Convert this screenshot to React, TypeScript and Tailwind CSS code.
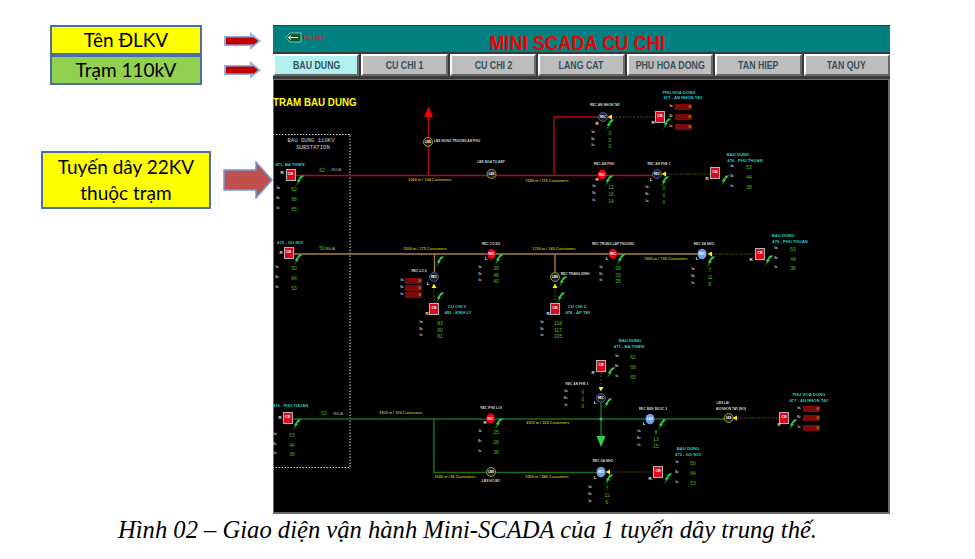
const tabs = ["BAU DUNG", "CU CHI 1", "CU CHI 2", "LANG CAT", "PHU HOA DONG", "TAN HIEP", "TAN QUY"];

// canvas sits at page (273,78), all diagram data below is in page coordinates
const OX = 273;
const OY = 78;

const labelColors = {
  white: "text-[#d4d4d4] text-[3.3px] font-bold",
  meter: "text-[#c4c4c4] text-[3.8px] font-bold",
  flag: "text-[#e8e8e8] text-[4.4px] font-bold",
  cyan: "text-[#25cfc6] text-[4.2px] font-bold",
  green: "text-[#4cc21c] text-[5px]",
  olive: "text-[#b4b414] text-[3.8px] font-bold",
  dim: "text-[#a8a8a8] text-[4px]",
  mono: "text-[#c8c8c8] text-[5.6px] font-['Liberation_Mono',monospace]",
  inner: "text-white text-[2.8px] font-bold",
};

type Tone = keyof typeof labelColors;
type Lbl = [number, number, string, Tone?];

const labels: Lbl[] = [
  // feeder 1
  [311, 141, "BAU DUNG 110KV", "mono"],
  [313, 148, "SUBSTATION", "mono"],
  [290, 165, "471- BA THIEN", "cyan"],
  [322, 169.5, "62", "green"],
  [336, 169.5, "/800A", "dim"],
  [457, 141.5, "LBS NONG TRUONG AN PHU"],
  [491, 163, "LBS NGA TU ANT"],
  [430, 180.5, "2000 m / 124 Customers", "olive"],
  [547, 181.5, "1500 m / 115 Customers", "olive"],
  [605, 106, "REC AN NHON TAY"],
  [679, 92.5, "PHU HOA DONG", "cyan"],
  [683, 98, "477 - AN NHON TAY", "cyan"],
  [604, 165, "REC AN PHU"],
  [659, 164.5, "REC AN PHE 1"],
  [738, 155, "BAU DUNG", "cyan"],
  [745, 160.5, "476 - PHU THUAN", "cyan"],
  // feeder 2
  [290, 243, "472 - GO NOI", "cyan"],
  [322, 248, "50", "green"],
  [330, 249, "/800A", "dim"],
  [425, 250, "1500 m / 175 Customers", "olive"],
  [419, 272, "REC LO 6"],
  [491, 245, "REC CO DO"],
  [457, 307, "CU CHI 2", "cyan"],
  [458, 313, "482 - KINH LY", "cyan"],
  [554, 250, "1700 m / 142 Customers", "olive"],
  [575, 275, "REC TRANG DINH"],
  [577, 307, "CU CHI 2", "cyan"],
  [578, 313, "478 - AP TAY", "cyan"],
  [613, 245, "REC TRUNG LAP THUONG"],
  [666, 259.5, "1800 m / 136 Customers", "olive"],
  [704, 245, "REC SA NHO"],
  [783, 236, "BAU DUNG", "cyan"],
  [790, 242, "476 - PHU THUAN", "cyan"],
  // feeder 3
  [290.5, 406, "476 - PHU THUAN", "cyan"],
  [324, 413, "53", "green"],
  [338, 414, "/800A", "dim"],
  [401, 414, "2500 m / 300 Customers", "olive"],
  [491, 409, "REC PHU LOI"],
  [548, 423.5, "2500 m / 220 Customers", "olive"],
  [455, 478, "1000 m / 85 Customers", "olive"],
  [491, 482, "LBS HO BO"],
  [547, 478, "3000 m / 240 Customers", "olive"],
  [630, 341, "BAU DUNG", "cyan"],
  [629, 346.5, "471 - BA THIEN", "cyan"],
  [577, 385, "REC AN PHE 1"],
  [653, 409.5, "REC BEN DUOC 3"],
  [723, 404, "LBS LAI"],
  [731, 409.5, "AN NHON TAY (NO)"],
  [809, 394.5, "PHU HOA DONG", "cyan"],
  [809, 400.5, "477 - AN NHON TAY", "cyan"],
  [603, 462, "REC SA NHO"],
  [688, 448.5, "BAU DUNG", "cyan"],
  [688, 455, "472 - GO NOI", "cyan"],
  // R / L flags
  [282, 173, "R", "flag"],
  [281, 253, "R", "flag"],
  [280, 418, "R", "flag"],
  [597, 124, "R", "flag"],
  [653, 123, "R", "flag"],
  [597, 180, "R", "flag"],
  [651, 180, "L", "flag"],
  [707, 179, "R", "flag"],
  [428, 284, "L", "flag"],
  [427, 314, "R", "flag"],
  [486, 259, "L", "flag"],
  [548, 314, "R", "flag"],
  [607, 259, "L", "flag"],
  [697, 259, "L", "flag"],
  [751, 260, "R", "flag"],
  [485, 423, "R", "flag"],
  [593, 373, "R", "flag"],
  [595, 403, "L", "flag"],
  [644, 424, "L", "flag"],
  [779, 425, "R", "flag"],
  [595, 478, "L", "flag"],
  [650, 479, "R", "flag"],
  // text inside the switch symbols
  [428, 142, "LBS", "inner"],
  [491.5, 174, "LBS", "inner"],
  [555, 277, "LBS", "inner"],
  [491, 472, "LBS", "inner"],
  [728.7, 418, "LBS", "inner"],
  [603, 117, "REC", "inner"],
  [657, 174, "REC", "inner"],
  [434, 277, "REC", "inner"],
  [601, 398, "REC", "inner"],
  [602, 174.5, "REC", "inner"],
  [491.5, 254, "REC", "inner"],
  [613, 254, "REC", "inner"],
  [490.5, 418.5, "REC", "inner"],
  [702, 254, "REC", "inner"],
  [650, 419, "LBS", "inner"],
  [601, 472, "REC", "inner"],
];

// meter blocks: label x, value x, three rows
const meters: { lx: number; vx: number; ys: number[]; vals: string[] }[] = [
  { lx: 278, vx: 294, ys: [189, 199, 209], vals: ["62", "68", "65"] },
  { lx: 593, vx: 610, ys: [133, 140, 146], vals: ["0", "0", "0"] },
  { lx: 594, vx: 611, ys: [187, 194, 201], vals: ["12", "16", "14"] },
  { lx: 647, vx: 664, ys: [188, 195, 202], vals: ["0", "0", "0"] },
  { lx: 732, vx: 749, ys: [167, 177, 187], vals: ["53", "44", "38"] },
  { lx: 277, vx: 294, ys: [268, 278, 288], vals: ["50", "64", "53"] },
  { lx: 421, vx: 440, ys: [323, 330, 336], vals: ["83", "80", "81"] },
  { lx: 480, vx: 496, ys: [268, 275, 281], vals: ["39", "46", "40"] },
  { lx: 542, vx: 558, ys: [323, 330, 336], vals: ["118", "117", "105"] },
  { lx: 601, vx: 618, ys: [268, 275, 281], vals: ["26", "33", "25"] },
  { lx: 693, vx: 710, ys: [270, 277, 284], vals: ["7", "11", "6"] },
  { lx: 776, vx: 793, ys: [249, 259, 268], vals: ["53", "44", "38"] },
  { lx: 275, vx: 292, ys: [435, 445, 454], vals: ["53", "44", "38"] },
  { lx: 480, vx: 496, ys: [432, 442, 452], vals: ["25", "26", "38"] },
  { lx: 617, vx: 633, ys: [357, 367, 377], vals: ["62", "68", "65"] },
  { lx: 566, vx: 583, ys: [392, 399, 406], vals: ["0", "0", "0"] },
  { lx: 639, vx: 656, ys: [432, 439, 446], vals: ["8", "13", "15"] },
  { lx: 590, vx: 607, ys: [488, 495, 502], vals: ["7", "11", "6"] },
  { lx: 677, vx: 693, ys: [463, 473, 483], vals: ["50", "64", "53"] },
];

// dead feeders, red boxes instead of numbers
const alarms: { lx: number; bx: number; w: number; ys: number[] }[] = [
  { lx: 671, bx: 675, w: 17, ys: [107, 117, 127] },
  { lx: 402, bx: 405, w: 17, ys: [281, 288, 295] },
  { lx: 799, bx: 803, w: 17, ys: [409, 418, 428] },
];

const breakers = [
  [290.5, 174.5], [660, 117], [715, 173], [288.5, 253], [434, 309], [555, 309],
  [760, 254], [287.5, 418], [601, 366], [784, 418], [658, 472],
];

const bolts = [
  [300, 181], [610, 125], [667, 124], [609, 181], [665, 182], [725, 181],
  [298, 260], [440, 262], [440, 298], [499, 260], [563, 282], [561, 298],
  [621, 260], [711, 262], [769, 261], [297, 425], [499, 424], [611, 373],
  [608, 404], [662, 425], [793, 425], [609, 480], [668, 479],
];

const arrowLeft = [[610, 117], [664, 174], [710, 254], [735, 418], [608, 472]];

const Label = ({ x, y, text, tone = "white" }: { x: number; y: number; text: string; tone?: Tone }) => (
  <span
    className={`absolute -translate-x-1/2 -translate-y-1/2 whitespace-nowrap leading-none ${labelColors[tone]}`}
    style={{ left: x - OX, top: y - OY }}
  >
    {text}
  </span>
);

const Breaker = ({ x, y }: { x: number; y: number }) => (
  <div
    className="absolute flex h-[12px] w-[10px] -translate-x-1/2 -translate-y-1/2 items-center justify-center border-[1.5px] border-[#b4b4b4] bg-[#dc0a1e] text-[3.5px] font-bold text-white"
    style={{ left: x - OX, top: y - OY }}
  >
    CB
  </div>
);

const Callout = ({ className, children }: { className: string; children: React.ReactNode }) => (
  <div className={`flex items-center justify-center border-2 border-[#4a6ea8] text-black font-['Lato','Noto_Sans',sans-serif] ${className}`}>
    {children}
  </div>
);

const SmallArrow = () => (
  <svg width="40" height="20" viewBox="0 0 40 20" className="shrink-0">
    <path d="M1 5H27V1L38 10L27 19V15H1Z" fill="#8db4e2" />
    <path d="M3 6.5H31L35 10L31 13.5H3Z" fill="#c00000" />
  </svg>
);

export default function App() {
  return (
    <div className="flex h-[559px] w-[975px] flex-col overflow-hidden bg-white font-['Liberation_Sans',sans-serif]">
      <div className="flex h-[514px] pt-[25px]">
        <aside className="relative flex w-[273px] shrink-0 flex-col">
          <div className="flex items-center">
            <div className="ml-[50px] flex w-[152px] flex-col">
              <Callout className="h-[30px] bg-[#ffff00] text-[19px]">Tên ĐLKV</Callout>
              <Callout className="h-[30px] bg-[#92d050] text-[19px]">Trạm 110kV</Callout>
            </div>
            <div className="ml-[21px] flex flex-col gap-[9px]">
              <SmallArrow />
              <SmallArrow />
            </div>
          </div>
          <div className="mt-[66px] flex items-center">
            <Callout className="ml-[41px] h-[58px] w-[170px] flex-col bg-[#ffff00] text-[19px] leading-[26px]">
              <span>Tuyến dây 22KV</span>
              <span>thuộc trạm</span>
            </Callout>
            <svg width="50" height="38" viewBox="0 0 50 38" className="ml-[12px] shrink-0">
              <path d="M1 9H33V1L49 19L33 37V29H1Z" fill="#c0504d" stroke="#6f9bd8" strokeWidth="1.5" />
            </svg>
          </div>
        </aside>

        <main className="flex w-[617px] shrink-0 flex-col bg-[#3a3a3a] blur-[0.4px]">
          <header className="relative mt-[1px] flex h-[26px] shrink-0 items-center justify-center bg-[#008080] pr-[9px]">
            <div className="absolute left-[12px] top-[6px] flex items-center gap-[1px]">
              <svg width="17" height="11" viewBox="0 0 17 11">
                <path d="M1 5.5L5 1H16V10H5Z" fill="#14582c" stroke="#9fd8b0" strokeWidth="0.8" />
                <path d="M3.5 5.5H13M3.5 5.5L6 3.5M3.5 5.5L6 7.5" stroke="#fff" strokeWidth="1" fill="none" />
              </svg>
              <span className="text-[5.5px] font-bold text-[#e01818]">PC LIST</span>
            </div>
            <h1 className="scale-x-[0.87] whitespace-nowrap pt-[7px] text-[21px] font-bold leading-none text-[#f00000]">MINI SCADA CU CHI</h1>
          </header>

          <nav className="grid h-[24px] shrink-0 grid-cols-7 gap-[2px] pt-[2px]">
            {tabs.map((t, i) => (
              <button
                key={t}
                className={`flex items-center justify-center border-2 border-t-white border-l-white border-r-[#666] border-b-[#666] text-[11px] font-bold text-[#35505c] ${
                  i === 0 ? "bg-[#b2f0f0]" : "bg-[#bdbdbd]"
                }`}
              >
                <span className="scale-x-[0.8] whitespace-nowrap">{t}</span>
              </button>
            ))}
          </nav>

          <div className="relative mt-[3px] min-h-0 flex-1 border-b-2 border-l border-r-2 border-t border-[#6a6a6a] bg-black">
            <div className="absolute -left-px top-[-2px] h-[436px] w-[617px]">
              <h2 className="absolute left-[0px] top-[19px] origin-left scale-x-[0.85] whitespace-nowrap text-[11.5px] font-bold leading-none text-[#ffff00]">TRAM BAU DUNG</h2>

              <svg width="617" height="436" viewBox="273 78 617 436" className="absolute left-0 top-0">
                {/* substation box */}
                <path d="M273 134.5H350V467.5H273" fill="none" stroke="#d0d0d0" strokeWidth="1" strokeDasharray="1.5 1.5" />

                {/* feeder 1 */}
                <g stroke="#b00a14" strokeWidth="1.4" fill="none">
                  <path d="M290 175.5H657" />
                  <path d="M428.5 175.5V116" />
                  <path d="M554 175.5V117H603" />
                </g>
                <path d="M428.5 106.5L433 117H424Z" fill="#f00000" />

                {/* feeder 2 */}
                <g stroke="#a87c4c" strokeWidth="1.4" fill="none">
                  <path d="M288 254H702" />
                  <path d="M434.5 254V272" />
                  <path d="M555 254V272" />
                </g>

                {/* feeder 3 */}
                <g stroke="#14701c" strokeWidth="1.5" fill="none">
                  <path d="M287 419H728" />
                  <path d="M434 419V472.5H601" />
                  <path d="M601 403V437" />
                </g>
                <circle cx="601" cy="419" r="1.6" fill="#2ccf50" />
                <path d="M596.5 436H605.5L601 447Z" fill="#2ccf50" />

                {/* open sections */}
                <g stroke="#66661a" strokeWidth="0.8" strokeDasharray="2 1.5" fill="none">
                  <path d="M612 117H655" />
                  <path d="M666 174H710" />
                  <path d="M712 254H755" />
                  <path d="M737 418H779" />
                  <path d="M610 472H653" />
                  <path d="M434 288V303" />
                  <path d="M555 288V303" />
                  <path d="M601 372V385" />
                </g>

                {/* switch symbols */}
                <g strokeWidth="0.9">
                  <circle cx="428" cy="142" r="4.5" fill="#222" stroke="#a8a814" />
                  <circle cx="491.5" cy="174" r="4.5" fill="#222" stroke="#a8a814" />
                  <circle cx="555" cy="277" r="4.5" fill="#222" stroke="#a8a814" />
                  <circle cx="491" cy="472" r="4.5" fill="#222" stroke="#a8a814" />
                  <circle cx="728.7" cy="418" r="4.5" fill="#222" stroke="#a8a814" />
                  <circle cx="603" cy="117" r="4.5" fill="#222" stroke="#3a62b0" />
                  <circle cx="657" cy="174" r="4.5" fill="#222" stroke="#3a62b0" />
                  <circle cx="434" cy="277" r="4.5" fill="#222" stroke="#3a62b0" />
                  <circle cx="601" cy="398" r="4.5" fill="#222" stroke="#3a62b0" />
                  <ellipse cx="602" cy="174.5" rx="4.3" ry="5" fill="#f00010" />
                  <ellipse cx="491.5" cy="254" rx="4.3" ry="5" fill="#f00010" />
                  <ellipse cx="613" cy="254" rx="4.3" ry="5" fill="#f00010" />
                  <ellipse cx="490.5" cy="418.5" rx="4.3" ry="5" fill="#f00010" />
                  <ellipse cx="702" cy="254" rx="4.5" ry="5.2" fill="#6c9ff0" />
                  <ellipse cx="650" cy="419" rx="4.5" ry="5.2" fill="#6c9ff0" />
                  <ellipse cx="601" cy="472" rx="4.5" ry="5.2" fill="#6c9ff0" />
                </g>

                {/* yellow direction marks */}
                <g fill="#ffee00">
                  {arrowLeft.map(([x, y]) => (
                    <path key={`${x}-${y}`} d={`M${x - 2.5} ${y}L${x + 2} ${y - 2.5}V${y + 2.5}Z`} />
                  ))}
                  <path d="M434 283.5L436.5 288H431.5Z" />
                  <path d="M555 283.5L557.5 288H552.5Z" />
                  <path d="M601 391.5L603.5 387H598.5Z" />
                </g>

                {bolts.map(([x, y]) => (
                  <path
                    key={`${x}-${y}`}
                    transform={`translate(${x} ${y})`}
                    d="M4.5 -5.5L-0.5 -1H1L-4.5 5.5L-1.5 0.5H-3.5L1 -5.5Z"
                    fill="#2fd23c"
                  />
                ))}
              </svg>

              {breakers.map(([x, y]) => (
                <Breaker key={`${x}-${y}`} x={x} y={y} />
              ))}

              {labels.map(([x, y, text, tone]) => (
                <Label key={`${x}-${y}-${text}`} x={x} y={y} text={text} tone={tone} />
              ))}

              {meters.map((m) =>
                m.ys.map((y, i) => (
                  <span key={`${m.lx}-${y}`}>
                    <Label x={m.lx} y={y} text={["Ia", "Ib", "Ic"][i]} tone="meter" />
                    <Label x={m.vx} y={y} text={m.vals[i]} tone="green" />
                  </span>
                )),
              )}

              {alarms.map((a) =>
                a.ys.map((y, i) => (
                  <span key={`${a.lx}-${y}`}>
                    <Label x={a.lx} y={y} text={["Ia", "Ib", "Ic"][i]} tone="meter" />
                    <div
                      className="absolute flex h-[6px] -translate-y-1/2 items-center justify-end bg-[#7c0a0a] pr-[1px] text-[4.4px] font-bold text-[#b4a014]"
                      style={{ left: a.bx - OX, top: y - OY, width: a.w }}
                    >
                      0
                    </div>
                  </span>
                )),
              )}
            </div>
          </div>
        </main>
      </div>

      <p className="whitespace-nowrap pl-[118px] pt-[2px] text-[24.6px] italic leading-[28px] text-black font-['Liberation_Serif',serif]">
        Hình 02 – Giao diện vận hành Mini-SCADA của 1 tuyến dây trung thế.
      </p>
    </div>
  );
}
